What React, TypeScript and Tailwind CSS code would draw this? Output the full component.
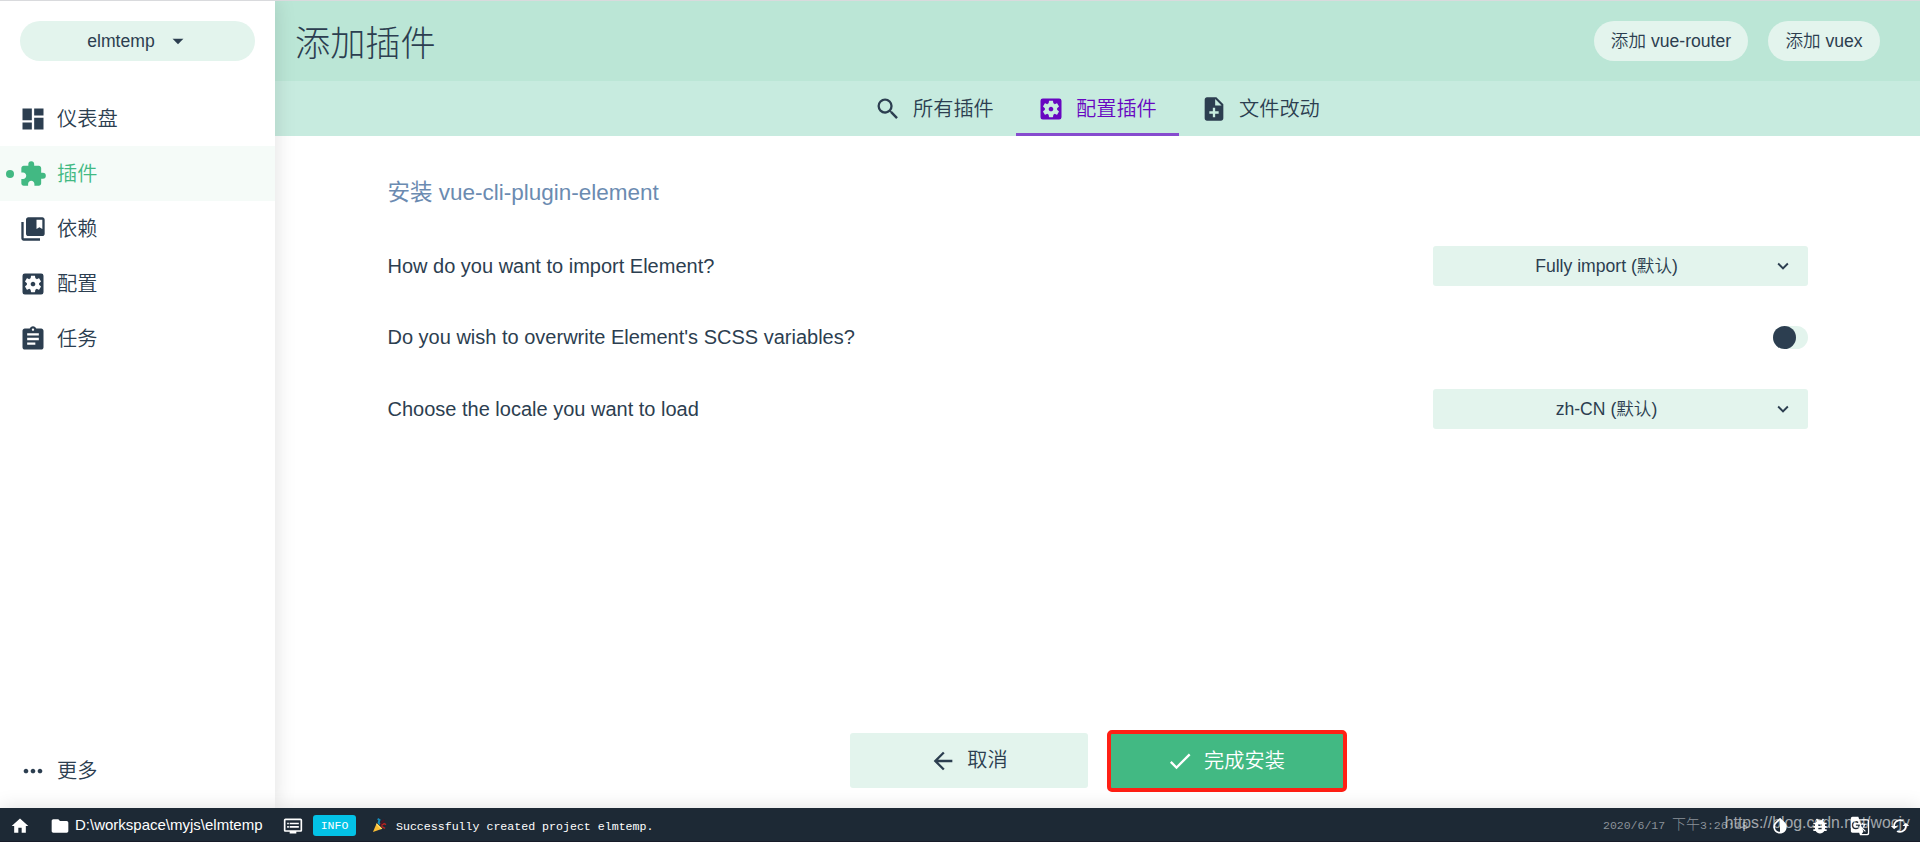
import React from "react";
import type { IconType } from "react-icons";
import {
  MdArrowBack,
  MdArrowDropDown,
  MdAssignment,
  MdBugReport,
  MdCached,
  MdCollectionsBookmark,
  MdDashboard,
  MdDone,
  MdDvr,
  MdExtension,
  MdFolder,
  MdGTranslate,
  MdHome,
  MdInvertColors,
  MdKeyboardArrowDown,
  MdMoreHoriz,
  MdNoteAdd,
  MdSearch,
  MdSettingsApplications,
} from "react-icons/md";

function NavItem({ icon: Icon, label, active = false }: { icon: IconType; label: string; active?: boolean }) {
  return (
    <a
      className={
        active
          ? "relative flex h-[55px] items-center bg-[#f5fbf8] pl-[19px] text-[#42b983]"
          : "relative flex h-[55px] items-center pl-[19px]"
      }
    >
      {active && <span className="absolute left-1.5 top-6 size-2 rounded-full bg-[#42b983]" />}
      <Icon className="size-7 shrink-0" />
      <span className="ml-2.5 pt-px text-[20.2px] font-[350] leading-7">{label}</span>
    </a>
  );
}

function Tab({ icon: Icon, label, active = false }: { icon: IconType; label: string; active?: boolean }) {
  return (
    <div
      className={
        active
          ? "relative flex h-[55px] w-[163px] items-center pl-[21px] text-[#6806c1]"
          : "relative flex h-[55px] w-[163px] items-center pl-[21px]"
      }
    >
      <Icon className="size-7 shrink-0" />
      <span className="ml-[11px] whitespace-nowrap pt-px text-[20.2px] font-[350] leading-7">{label}</span>
      {active && <span className="absolute inset-x-0 bottom-0 h-[3px] bg-[#864bce]" />}
    </div>
  );
}

function SelectBox({ value }: { value: string }) {
  return (
    <div className="flex h-10 w-[375px] items-center rounded-[3px] bg-[#e3f4ed] pl-2 pr-3.5 text-[17.6px]">
      <span className="flex-1 text-center font-[350]">{value}</span>
      <MdKeyboardArrowDown className="size-[22px]" />
    </div>
  );
}

function PromptRow({ label, children }: { label: string; children: React.ReactNode }) {
  return (
    <div className="flex h-[71.5px] items-center justify-between">
      <span className="text-[20px]">{label}</span>
      {children}
    </div>
  );
}

export default function App() {
  return (
    <div className="flex h-[842px] w-[1920px] flex-col overflow-hidden border-t border-[#d9dadd] bg-white font-['Liberation_Sans','Noto_Sans_CJK_SC',sans-serif] text-[#2c3e50]">
      <div className="flex min-h-0 flex-1">
        <aside className="z-10 flex w-[275px] shrink-0 flex-col bg-white shadow-[0_0_20px_rgba(0,0,0,0.13)]">
          <button className="mx-5 mt-5 flex h-10 items-center justify-center rounded-full bg-[#e3f4ed] pl-[3px] text-[17.6px]">
            elmtemp
            <MdArrowDropDown className="ml-2.5 size-[26px]" />
          </button>
          <nav className="mt-[30px] flex flex-1 flex-col">
            <NavItem icon={MdDashboard} label="仪表盘" />
            <NavItem icon={MdExtension} label="插件" active />
            <NavItem icon={MdCollectionsBookmark} label="依赖" />
            <NavItem icon={MdSettingsApplications} label="配置" />
            <NavItem icon={MdAssignment} label="任务" />
            <div className="mb-2.5 mt-auto">
              <NavItem icon={MdMoreHoriz} label="更多" />
            </div>
          </nav>
        </aside>

        <main className="flex min-w-0 flex-1 flex-col">
          <header className="flex h-20 items-center bg-[#bbe6d6] pl-5 pr-10">
            <h1 className="flex-1 pt-[5px] text-[35.2px] font-light leading-none">添加插件</h1>
            <div className="flex gap-5 text-[17.6px] font-[350]">
              <button className="h-10 w-[154px] rounded-full bg-[#e3f4ed]">添加 vue-router</button>
              <button className="h-10 w-28 rounded-full bg-[#e3f4ed]">添加 vuex</button>
            </div>
          </header>
          <div className="flex h-[55px] justify-center bg-[#c7ebdf]">
            <Tab icon={MdSearch} label="所有插件" />
            <Tab icon={MdSettingsApplications} label="配置插件" active />
            <Tab icon={MdNoteAdd} label="文件改动" />
          </div>
          <section className="flex flex-1 flex-col pl-[112.5px] pr-[112px] pt-[41px]">
            <h2 className="mb-[21px] h-8 text-[22.5px] leading-8 text-[#6b8bb1]">安装 vue-cli-plugin-element</h2>
            <PromptRow label="How do you want to import Element?">
              <SelectBox value="Fully import (默认)" />
            </PromptRow>
            <PromptRow label="Do you wish to overwrite Element's SCSS variables?">
              <span className="flex h-[23px] w-[35px] rounded-full bg-[#e3f4ed]">
                <span className="size-[23px] rounded-full bg-[#2c3e50]" />
              </span>
            </PromptRow>
            <PromptRow label="Choose the locale you want to load">
              <SelectBox value="zh-CN (默认)" />
            </PromptRow>
          </section>
          <div className="flex h-[79px] items-start justify-center gap-[19px] pl-px text-[20.2px] font-[350]">
            <button className="mt-1 flex h-[55px] w-[238px] items-center justify-center rounded-[3px] bg-[#e3f4ed]">
              <MdArrowBack className="mr-2.5 size-7" />
              取消
            </button>
            <button className="mt-px flex h-[62px] w-[240px] items-center justify-center rounded-[5px] border-4 border-[#ff2015] bg-[#42b983] pr-0.5 text-white">
              <MdDone className="mr-2.5 size-7" />
              完成安装
            </button>
          </div>
        </main>
      </div>

      <footer className="relative z-20 flex h-[34px] shrink-0 items-center border-b border-[#171c29] bg-[#1d2935] pt-0.5 text-white shadow-[0_0_20px_rgba(0,0,0,0.13)]">
        <MdHome className="ml-2.5 size-5" />
        <MdFolder className="ml-5 size-5" />
        <span className="ml-[5px] w-[208px] text-[15px]">D:\workspace\myjs\elmtemp</span>
        <MdDvr className="size-5" />
        <span className="ml-2.5 flex h-[21px] w-[43px] items-center justify-center rounded-[3px] bg-[#03c2e6] font-['Liberation_Mono','Noto_Sans_CJK_SC',monospace] text-[11.5px]">
          INFO
        </span>
        <svg viewBox="0 0 16 16" className="ml-4 size-[15px]">
          <path d="M1 15 5 5.5 11 11.5Z" fill="#f9bd35" />
          <path d="M5 5.5 11 11.5 9.5 12 4.5 7Z" fill="#ffdc68" />
          <path d="M6 1 8 2 7 5 9 7" stroke="#168dbb" strokeWidth="2" fill="none" />
          <path d="M9 8 11 4 13 2" stroke="#4b1524" strokeWidth="2" fill="none" />
          <path d="M10 8 13 6 15 7M10 9 14 11" stroke="#b92320" strokeWidth="1.6" fill="none" />
        </svg>
        <span className="ml-[9px] pt-0.5 font-['Liberation_Mono','Noto_Sans_CJK_SC',monospace] text-[11.6px]">
          Successfully created project elmtemp.
        </span>
        <span className="ml-auto w-[150px] whitespace-nowrap font-['Liberation_Mono','Noto_Sans_CJK_SC',monospace] text-[11.5px] font-light text-[#8b9299]">
          2020/6/17 <span className="text-[14px]">下午</span>3:26:18
        </span>
        <div className="ml-[17px] mr-2.5 flex gap-5">
          <MdInvertColors className="size-5" />
          <MdBugReport className="size-5" />
          <MdGTranslate className="size-5" />
          <MdCached className="size-5" />
        </div>
        <span className="absolute right-2.5 top-[3px] text-[15.8px] leading-6 text-white/60">
          https://blog.csdn.net/wocjy
        </span>
      </footer>
    </div>
  );
}
